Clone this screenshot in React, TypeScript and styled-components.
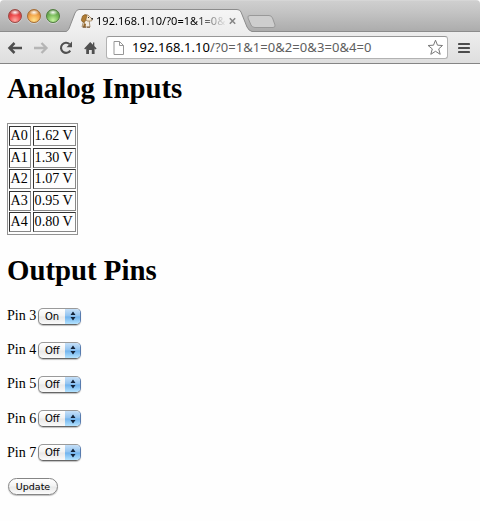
import React from "react";
import styled, { createGlobalStyle } from "styled-components";

const GlobalStyle = createGlobalStyle`
  * { box-sizing: border-box; }
  html, body { margin: 0; background: #fff; overflow: hidden; }
`;

const Window = styled.div`
  width: 480px;
  height: 521px;
  overflow: hidden;
  display: flex;
  flex-direction: column;
  background: #fefefe;
  border-radius: 4px 4px 0 0;
`;

const TabStrip = styled.div`
  height: 32px;
  flex: none;
  display: flex;
  align-items: flex-end;
  background: linear-gradient(#cfcfcf, #c4c4c4 35%, #adadad 95%);
  border-top: 1px solid #d6d6d6;
  box-shadow: inset 0 -1px #8c8c8c;
`;

const Lights = styled.div`
  display: flex;
  gap: 5px;
  padding: 0 0 9px 8px;
  width: 66px;
  flex: none;
`;

const Light = styled.span<{ $dark: string; $mid: string; $glow: string }>`
  width: 14px;
  height: 14px;
  flex: none;
  border-radius: 50%;
  background:
    radial-gradient(ellipse 5px 3px at 50% 20%, rgba(255, 255, 255, 0.95), rgba(255, 255, 255, 0) 100%),
    radial-gradient(circle at 50% 85%, ${(p) => p.$glow}, ${(p) => p.$mid} 50%, ${(p) => p.$dark} 100%);
  border: 1px solid ${(p) => p.$dark};
  box-shadow: 0 1px 0 rgba(255, 255, 255, 0.35);
`;

const Tab = styled.div`
  position: relative;
  width: 186px;
  height: 23px;
  flex: none;
  display: flex;
  align-items: center;
  padding: 0 13px 0 14px;
`;

const TabShape = styled.svg`
  position: absolute;
  left: 0;
  top: 0;
`;

const Favicon = styled.svg`
  position: relative;
  flex: none;
  margin-right: 2px;
`;

const TabTitle = styled.span`
  position: relative;
  width: 129px;
  white-space: nowrap;
  font: 11px/16px "Noto Sans", sans-serif;
  letter-spacing: 0.05px;
  color: #000;
  mask-image: linear-gradient(90deg, #000 98px, transparent 131px);
`;

const CloseIcon = styled.svg`
  position: relative;
  flex: none;
  margin-left: 4px;
`;

const NewTab = styled.svg`
  flex: none;
  margin: 0 0 3px -5px;
`;

const Toolbar = styled.div`
  height: 32px;
  flex: none;
  display: flex;
  align-items: center;
  background: linear-gradient(#eeeeee, #dedede);
  border-bottom: 1px solid #858585;
`;

const NavIcons = styled.div`
  display: flex;
  gap: 10px;
  width: 106px;
  padding-left: 7px;
  flex: none;
`;

const AddressBar = styled.div`
  width: 342px;
  height: 23px;
  flex: none;
  display: flex;
  align-items: center;
  padding: 0 4px 0 6px;
  background: #fff;
  border: 1px solid #b2b2b2;
  border-top-color: #979797;
  border-radius: 3px;
`;

const Url = styled.span`
  flex: 1;
  margin-left: 7px;
  padding-bottom: 1px;
  white-space: nowrap;
  font: 13px/20px "Noto Sans", sans-serif;
  color: #606060;
  letter-spacing: 0.06px;
`;

const Host = styled.span`
  color: #000;
`;

const MenuIcon = styled.svg`
  flex: none;
  margin-left: 10px;
`;

const Page = styled.main`
  padding: 7px 7px 0;
  font: 14.1px/17px "Liberation Serif", serif;
  color: #000;
`;

const Heading = styled.h1`
  margin: 0;
  font-size: 28.8px;
  line-height: 34px;
  font-weight: bold;
  white-space: nowrap;
`;

const ReadingsTable = styled.div`
  display: flex;
  flex-direction: column;
  gap: 1.5px;
  width: 71px;
  height: 112px;
  margin: 18px 0 18px;
  padding: 2px 1px;
  border: 1px solid #929292;
`;

const ReadingRow = styled.div`
  display: grid;
  grid-template-columns: 22px 43px;
  column-gap: 2px;
  height: 20px;
  flex: none;
`;

const Cell = styled.span`
  padding-left: 0.6px;
  line-height: 17px;
  white-space: nowrap;
  border: 1px solid #888;
  border-top-color: #333;
  border-left-color: #333;
`;

const PinList = styled.div`
  display: flex;
  flex-direction: column;
  gap: 16.2px;
  padding-top: 20px;
`;

const PinRow = styled.div`
  display: flex;
  align-items: center;
  height: 18px;
`;

const PinLabel = styled.span`
  width: 31px;
  padding-bottom: 1px;
  white-space: nowrap;
`;

const Select = styled.button`
  display: flex;
  width: 43px;
  height: 17px;
  padding: 0;
  overflow: hidden;
  border: 1px solid #858585;
  border-color: #9a9a9a #577bae #666 #8a8a8a;
  border-radius: 5px;
  background: linear-gradient(#fff, #f2f2f2 48%, #e7e7e7 52%, #fafafa);
  box-shadow: 0 1px 1px rgba(0, 0, 0, 0.25);
`;

const SelectValue = styled.span`
  flex: 1;
  padding-left: 6px;
  text-align: left;
  font: 10px/16px "DejaVu Sans", sans-serif;
  color: #000;
`;

const Stepper = styled.span`
  width: 15px;
  height: 15px;
  display: flex;
  justify-content: center;
  align-items: center;
  background: linear-gradient(#c6e0f8, #8fc2f0 48%, #6fb2ed 52%, #b4e3ff);
`;

const UpdateButton = styled.button`
  display: block;
  width: 50px;
  height: 17px;
  margin: 16px 0 0 1px;
  padding: 0;
  font: 9.5px/16px "DejaVu Sans", sans-serif;
  color: #000;
  border: 1px solid #858585;
  border-radius: 9px;
  background: linear-gradient(#fff, #f3f3f3 48%, #e8e8e8 52%, #fbfbfb);
  box-shadow: 0 1px 1px rgba(0, 0, 0, 0.25);
`;

const readings = [
  ["A0", "1.62 V"],
  ["A1", "1.30 V"],
  ["A2", "1.07 V"],
  ["A3", "0.95 V"],
  ["A4", "0.80 V"],
];

const pins = [
  ["Pin 3", "On"],
  ["Pin 4", "Off"],
  ["Pin 5", "Off"],
  ["Pin 6", "Off"],
  ["Pin 7", "Off"],
];

const BrowserTab = () => (
  <Tab>
    <TabShape width="186" height="23" viewBox="0 0 186 23">
      <defs>
        <linearGradient id="tab" x1="0" y1="0" x2="0" y2="1">
          <stop offset="0" stopColor="#f5f5f5" />
          <stop offset="1" stopColor="#eeeeee" />
        </linearGradient>
      </defs>
      <path d="M0 23V22.5C2 22 3 20 4 17L9 4Q10.500 .5 13 .5H171Q174 .5 175 3L181 18Q183 22 186 22.500V23Z" fill="url(#tab)" />
      <path d="M0 22.5C2 22 3 20 4 17L9 4Q10.500 .5 13 .5H171Q174 .5 175 3L181 18Q183 22 186 22.500" fill="none" stroke="#8c8c8c" />
    </TabShape>
    <Favicon width="14" height="16" viewBox="0 0 14 16">
      <path d="M5 7L9 6.500 10 14H2L3 10Z" fill="#f4eee4" stroke="#8b6b42" strokeWidth=".7" />
      <path d="M3 3Q5 .8 8 2L11 5 12.500 6 11.500 8 7 8Z" fill="#f3e5cc" stroke="#876236" strokeWidth=".6" />
      <path d="M2.500 3Q5 .8 7 2.500L6 6 4.500 9.500Q1.500 9 1.300 7Z" fill="#b07d34" stroke="#80551f" strokeWidth=".6" />
      <path d="M4 10L6 11 5.500 14H3Z" fill="#95692f" />
      <path d="M11.300 5h1.700v1.600h-1.700zM8 4h1v1H8z" fill="#333" />
      <path d="M3 14.200h3M7 14.200h3" stroke="#765638" />
    </Favicon>
    <TabTitle>192.168.1.10/?0=1&amp;1=0&amp;</TabTitle>
    <CloseIcon width="7" height="8" viewBox="0 0 7 8">
      <path d="M.8 1.200L6.200 6.800M6.200 1.200L.8 6.800" stroke="#858585" strokeWidth="1.500" />
    </CloseIcon>
  </Tab>
);

const Navigation = () => (
  <NavIcons>
    <svg width="16" height="16" viewBox="0 0 16 16">
      <path d="M7.500 3L2.500 8l5 5M3 8h12" fill="none" stroke="#4e4e4e" strokeWidth="2.500" />
    </svg>
    <svg width="16" height="16" viewBox="0 0 16 16">
      <path d="M8.500 3l5 5-5 5M13 8H1" fill="none" stroke="#b5b5b5" strokeWidth="2.300" />
    </svg>
    <svg width="15" height="16" viewBox="0 0 15 16">
      <path d="M10.500 4A5.100 5.100 0 1 0 11.300 10.700" fill="none" stroke="#505050" strokeWidth="2.100" />
      <path d="M13 1.500V7.300H7.500Z" fill="#505050" />
    </svg>
    <svg width="14" height="16" viewBox="0 0 14 16">
      <path d="M6.200 2L.2 8.500l1 1L2.200 8.600V14H5V10H7.800V14h2.800V8.600l1 .9 1-1-2.300-2.400V2.500H9v2.200Z" fill="#505050" />
    </svg>
  </NavIcons>
);

const App = () => (
  <>
    <GlobalStyle />
    <Window>
      <TabStrip>
        <Lights>
          <Light $dark="#9b4641" $mid="#ec4648" $glow="#ffaaa2" />
          <Light $dark="#a66c32" $mid="#f3a54a" $glow="#ffe28c" />
          <Light $dark="#4e7c3c" $mid="#75b958" $glow="#c7f4a1" />
        </Lights>
        <BrowserTab />
        <NewTab width="29" height="15" viewBox="0 0 29 15">
          <path d="M3 1.500H22Q24.500 1.500 25.500 4L28 11Q28.500 13.500 26 13.500H8Q5 13.500 4 11L1 4Q.3 1.500 3 1.500Z" fill="#cecece" stroke="#999" />
        </NewTab>
      </TabStrip>
      <Toolbar>
        <Navigation />
        <AddressBar>
          <svg width="12" height="14" viewBox="0 0 12 14">
            <path d="M1 .5H6.500L10.500 4.500V13.500H1ZM6.500 .5V4.500H10.500" fill="#fff" stroke="#969696" />
          </svg>
          <Url><Host>192.168.1.10</Host>/?0=1&amp;1=0&amp;2=0&amp;3=0&amp;4=0</Url>
          <svg width="17" height="17" viewBox="0 0 17 17">
            <path d="M9.500 1.200L11.500 6.200 16.500 6.500 12.700 9.900 14.200 15.300 9.500 12.300 4.800 15.300 6.300 9.900 2.100 6.500 7.500 6.200Z" fill="#fff" stroke="#777" strokeLinejoin="round" />
          </svg>
        </AddressBar>
        <MenuIcon width="12" height="12" viewBox="0 0 12 12">
          <path d="M1 2H11M1 6H11M1 10H11" stroke="#4b4b4b" strokeWidth="2.200" strokeLinecap="round" />
        </MenuIcon>
      </Toolbar>
      <Page>
        <Heading>Analog Inputs</Heading>
        <ReadingsTable>
          {readings.map(([name, value]) => (
            <ReadingRow key={name}>
              <Cell>{name}</Cell>
              <Cell>{value}</Cell>
            </ReadingRow>
          ))}
        </ReadingsTable>
        <Heading>Output Pins</Heading>
        <PinList>
          {pins.map(([name, value]) => (
            <PinRow key={name}>
              <PinLabel>{name}</PinLabel>
              <Select>
                <SelectValue>{value}</SelectValue>
                <Stepper>
                  <svg width="6" height="10" viewBox="0 0 6 10">
                    <path d="M3 .5L5.500 4H.5ZM3 9.500L5.500 6H.5Z" fill="#14243a" />
                  </svg>
                </Stepper>
              </Select>
            </PinRow>
          ))}
        </PinList>
        <UpdateButton>Update</UpdateButton>
      </Page>
    </Window>
  </>
);

export default App;
